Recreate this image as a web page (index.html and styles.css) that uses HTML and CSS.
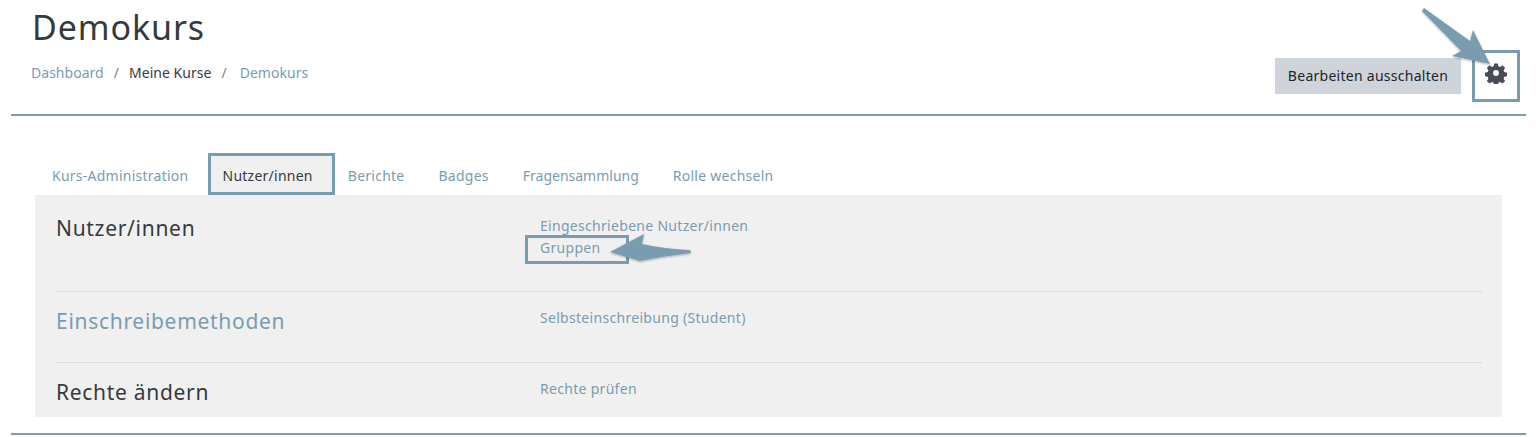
FILE: index.html
```html
<!DOCTYPE html>
<html lang="de">
<head>
<meta charset="utf-8">
<title>Demokurs</title>
<link rel="stylesheet" href="styles.css">
</head>
<body>
<div class="page">
  <header class="header">
    <div class="head-left">
      <h1 class="title">Demokurs</h1>
      <nav class="crumbs">
        <a class="link">Dashboard</a><span class="sep">/</span><span class="cur">Meine Kurse</span><span class="sep sep2">/</span><a class="link">Demokurs</a>
      </nav>
    </div>
    <div class="head-right">
      <span class="btn">Bearbeiten ausschalten</span>
      <span class="gearbox">
        <svg class="gear" width="22" height="22" viewBox="0 0 24 24"><path fill="#494c56" fill-rule="evenodd" d="M10 1.5h4l.6 3 2 .85 2.55-1.7 2.8 2.8-1.7 2.55.85 2 2.9.6v4l-2.9.6-.85 2 1.7 2.55-2.8 2.8-2.55-1.7-2 .85-.6 3h-4l-.6-3-2-.85-2.55 1.7-2.8-2.8 1.7-2.55-.85-2-2.9-.6v-4l2.9-.6.85-2-1.7-2.55 2.8-2.8 2.55 1.7 2-.85zM12 8.8a3.2 3.2 0 1 0 0 6.4 3.2 3.2 0 0 0 0-6.4z"/></svg>
      </span>
    </div>
  </header>
  <main class="main">
    <ul class="tabs">
      <li class="tab">Kurs-Administration</li>
      <li class="tab active">Nutzer/innen</li>
      <li class="tab">Berichte</li>
      <li class="tab">Badges</li>
      <li class="tab tab-tight">Fragensammlung</li>
      <li class="tab">Rolle wechseln</li>
    </ul>
    <section class="panel">
      <div class="row row-a">
        <h3 class="row-title">Nutzer/innen</h3>
        <div class="row-links">
          <a class="link">Eingeschriebene Nutzer/innen</a>
          <a class="link">Gruppen</a>
        </div>
      </div>
      <div class="row row-b">
        <h3 class="row-title link">Einschreibemethoden</h3>
        <div class="row-links"><a class="link">Selbsteinschreibung (Student)</a></div>
      </div>
      <div class="row row-c">
        <h3 class="row-title">Rechte ändern</h3>
        <div class="row-links"><a class="link">Rechte prüfen</a></div>
      </div>
    </section>
  </main>
  <div class="rule"></div>
  <div class="mark-gruppen"></div>
  <svg class="arrows" width="1536" height="437" viewBox="0 0 1536 437">
    <defs><filter id="s" x="-20%" y="-20%" width="140%" height="140%"><feDropShadow dx="0" dy="1" stdDeviation="1" flood-color="#000" flood-opacity=".3"/></filter></defs>
    <path filter="url(#s)" fill="#7a9cb0" d="M1424 8L1470 41 1473 30 1490 64 1452 56 1461 51 1422 11z"/>
    <path filter="url(#s)" fill="#7a9cb0" d="M610 252L644 234 642 244 Q665 249 690 250L691 253 Q665 256 640 261 644 269z"/>
  </svg>
</div>
</body>
</html>
```
FILE: styles.css
```css
* { box-sizing: border-box; }
html, body { margin: 0; padding: 0; background: #fff; }
body { font-family: "Noto Sans", "Open Sans", sans-serif; color: #373a3c; font-size: 14px; }
.page { position: relative; width: 1536px; height: 437px; overflow: hidden; }
.link { color: #7a9cb0; }
.header {
  margin: 0 10px 0 11px;
  height: 116px;
  border-bottom: 2px solid #7a9cb0;
  display: flex;
  justify-content: space-between;
}
.head-left { padding-left: 20px; }
.title { margin: 7px 0 0 1px; font-size: 34px; line-height: 40px; font-weight: 400; letter-spacing: .9px; color: #373a3c; }
.crumbs { margin-top: 16px; font-size: 14px; line-height: 20px; white-space: nowrap; letter-spacing: .03px; }
.sep { color: #7b8288; margin: 0 10px; }
.sep2 { margin-right: 13px; }
.cur { color: #373a3c; }
.head-right { display: flex; align-items: flex-start; padding-top: 50px; }
.btn {
  margin-top: 8px;
  width: 186px;
  height: 36px;
  padding-bottom: 2px;
  background: #ced4da;
  color: #212529;
  display: flex;
  align-items: center;
  justify-content: center;
  font-size: 14px;
  letter-spacing: .27px;
  white-space: nowrap;
}
.gearbox {
  margin-left: 11px;
  margin-right: 6px;
  padding-bottom: 6px;
  width: 48px;
  height: 52px;
  border: 3px solid #7a9cb0;
  display: flex;
  align-items: center;
  justify-content: center;
}
.main { padding: 37px 34px 0 35px; }
.tabs { list-style: none; margin: 0; padding: 0 0 0 3px; display: flex; height: 42px; position: relative; z-index: 1; }
.tab { padding: 13px 14px 0; font-size: 14px; line-height: 20px; letter-spacing: .25px; color: #7a9cb0; white-space: nowrap; margin-right: 6px; }
.tab-tight { letter-spacing: 0; }
.tab.active { color: #373a3c; background: #f0f0f0; border: 3px solid #7a9cb0; padding: 10px 19px 0 12px; margin: 0 -1px 0 -1px; }
.panel { background: #f0f0f0; height: 222px; padding: 0 20px; display: flex; flex-direction: column; }
.row { display: flex; border-bottom: 1px solid #dcdcdc; }
.row-a { height: 97px; padding-top: 18px; }
.row-b { height: 71px; padding-top: 14px; }
.row-c { height: 54px; padding-top: 14px; border-bottom: 0; }
.row-title { margin: 0; padding-left: 1px; width: 485px; flex: none; font-size: 21px; line-height: 30px; font-weight: 400; letter-spacing: .7px; }
.row-links { display: flex; flex-direction: column; font-size: 14px; line-height: 22px; letter-spacing: .3px; }
.row-a .row-links { margin-top: 2px; }
.row-b .row-links, .row-c .row-links { margin-top: 1px; }
.rule { margin: 16px 10px 0 11px; height: 2px; background: #7a9cb0; }
.mark-gruppen { position: absolute; left: 525px; top: 235px; width: 104px; height: 29px; border: 3px solid #7a9cb0; }
.arrows { position: absolute; left: 0; top: 0; pointer-events: none; }
```
